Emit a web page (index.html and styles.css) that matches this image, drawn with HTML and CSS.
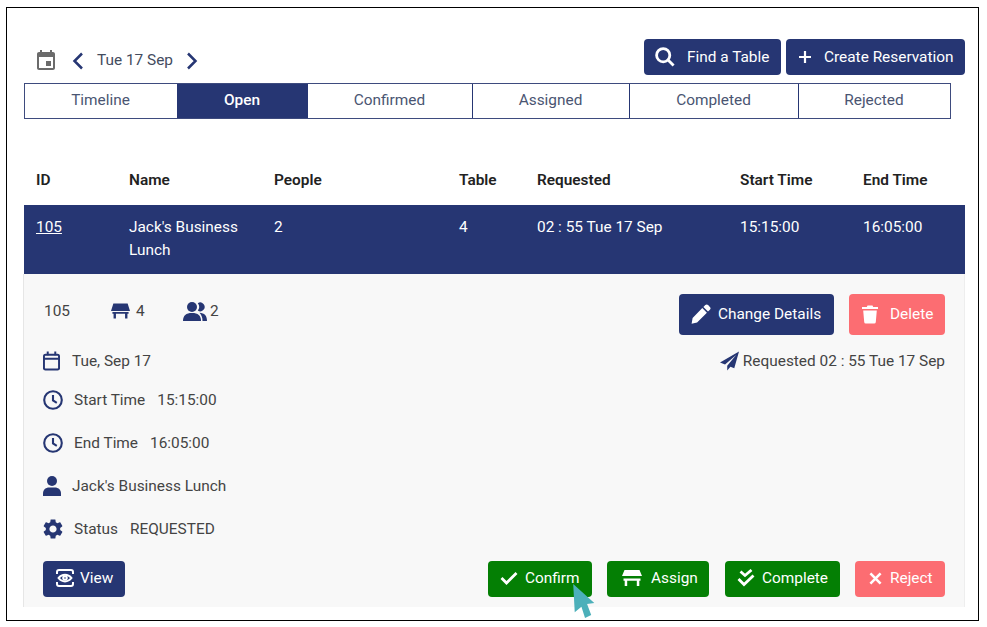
FILE: index.html
```html
<!DOCTYPE html>
<html lang="en">
<head>
<meta charset="utf-8">
<title>Reservations</title>
<link rel="stylesheet" href="styles.css">
</head>
<body>
<div class="frame">
  <header class="topbar">
    <div class="datenav">
      <svg class="ico-event" viewBox="0 0 24 24"><path d="M17 12h-5v5h5v-5zM16 1v2H8V1H6v2H5c-1.11 0-1.99.9-1.99 2L3 19c0 1.1.89 2 2 2h14c1.1 0 2-.9 2-2V5c0-1.1-.9-2-2-2h-1V1h-2zm3 18H5V8h14v11z"/></svg>
      <svg class="ico-chev ico-prev" viewBox="0 0 12 18"><path d="M10 1.500 2.500 9l7.500 7.500"/></svg>
      <span class="datetext">Tue 17 Sep</span>
      <svg class="ico-chev ico-next" viewBox="0 0 12 18"><path d="m2 1.500 7.500 7.500-7.500 7.500"/></svg>
    </div>
    <div class="topactions">
      <button class="btn btn-navy btn-find"><svg class="ico-white-stroke ico20 ico-search" viewBox="0 0 20 20"><circle cx="8.200" cy="8.200" r="6.600"/><path d="m12.800 12.800 5.800 5.800"/></svg>Find a Table</button>
      <button class="btn btn-navy btn-create"><svg class="ico-white-stroke ico14" viewBox="0 0 14 14"><path d="M7 1v12M1 7h12"/></svg>Create Reservation</button>
    </div>
  </header>

  <nav class="tabs">
    <div class="tab">Timeline</div>
    <div class="tab tab-active">Open</div>
    <div class="tab">Confirmed</div>
    <div class="tab">Assigned</div>
    <div class="tab">Completed</div>
    <div class="tab">Rejected</div>
  </nav>

  <div class="thead cols">
    <div>ID</div><div>Name</div><div>People</div><div>Table</div><div>Requested</div><div>Start Time</div><div>End Time</div>
  </div>
  <div class="trow cols">
    <div><a class="idlink" href="#">105</a></div>
    <div>Jack's Business Lunch</div>
    <div>2</div>
    <div>4</div>
    <div>02 : 55 Tue 17 Sep</div>
    <div>15:15:00</div>
    <div>16:05:00</div>
  </div>

  <section class="detail">
    <div class="detail-top">
      <div class="summary">
        <span class="sum-id">105</span>
        <span class="sum-item sum-table"><svg class="ico-navy ico-table" viewBox="0 0 20 16"><path d="M2.500 0h15L20 8H0zM1.500 9h17v2h-1.200v5h-2.500v-5H5.200v5H2.700v-5H1.500z"/></svg>4</span>
        <span class="sum-item"><svg class="ico-navy ico-users" viewBox="0 0 24 19"><circle cx="9" cy="5" r="5"/><path d="M0 19c0-5.500 3-8 9-8s9 2.500 9 8z"/><path d="M14.800 8.600a6 6 0 0 0 0-7.400 4.400 4.400 0 1 1 0 7.400zM16.500 10.800c5 .2 7.500 3 7.500 8.200h-4.500c0-3.300-1-6-3-8.200z"/></svg>2</span>
      </div>
      <div class="detail-actions">
        <button class="btn btn-navy btn-change"><svg class="ico-white ico20" viewBox="0 0 20 20"><path d="M14.300 1.100a2 2 0 0 1 2.800 0l1.800 1.800a2 2 0 0 1 0 2.800l-1.900 1.900-4.600-4.600zM11.300 4.100l4.600 4.600-9.800 9.800-5.500 1.300 1-5.800z"/></svg>Change Details</button>
        <button class="btn btn-red btn-delete"><svg class="ico-white ico-trash" viewBox="0 0 16 18"><path d="M5.500 0h5l.7 1.500H16v2H0v-2h4.800zM1.200 5h13.600l-1 11.500a1.600 1.600 0 0 1-1.600 1.500H3.800a1.600 1.600 0 0 1-1.600-1.500z"/></svg>Delete</button>
      </div>
    </div>

    <div class="date-row">
      <div class="line">
        <svg class="ico-navy-stroke ico-cal" viewBox="0 0 18 20"><rect x="1" y="3.500" width="16" height="15.500" rx="1.500"/><path d="M1 7.500h16M5 0v4M13 0v4"/></svg>
        <span class="date-label">Tue, Sep 17</span>
      </div>
      <div class="line requested">
        <svg class="ico-navy ico-plane" viewBox="0 0 20 20"><path d="M20 0 0 11.500l5.300 2.300L17 3.600 7.600 15v5l3.400-4 4 1.700z"/></svg>
        <span>Requested 02 : 55 Tue 17 Sep</span>
      </div>
    </div>

    <div class="line info">
      <svg class="ico-navy-stroke ico-clock" viewBox="0 0 20 20"><circle cx="10" cy="10" r="8.800"/><path d="M10 5v5.500l3.800 2.300"/></svg>
      <span class="info-label">Start Time</span><span>15:15:00</span>
    </div>
    <div class="line info">
      <svg class="ico-navy-stroke ico-clock" viewBox="0 0 20 20"><circle cx="10" cy="10" r="8.800"/><path d="M10 5v5.500l3.800 2.300"/></svg>
      <span class="info-label">End Time</span><span>16:05:00</span>
    </div>
    <div class="line info">
      <svg class="ico-navy ico-person" viewBox="0 0 18 20"><circle cx="9" cy="5" r="5"/><path d="M0 20v-2.500C0 13.500 3 11.500 6 11.500h6c3 0 6 2 6 6V20z"/></svg>
      <span class="name-label">Jack's Business Lunch</span>
    </div>
    <div class="line info">
      <svg class="ico-navy ico-gear" viewBox="2 2 20 20"><path d="M19.140 12.940c.04-.3.06-.61.06-.94 0-.32-.02-.64-.07-.94l2.030-1.580c.18-.14.23-.41.12-.61l-1.920-3.320c-.12-.22-.37-.29-.59-.22l-2.390.96c-.5-.38-1.030-.7-1.620-.94l-.36-2.540c-.04-.24-.24-.41-.48-.41h-3.840c-.24 0-.43.17-.47.41l-.36 2.540c-.59.24-1.130.57-1.620.94l-2.390-.96c-.22-.08-.47 0-.59.22L2.740 8.870c-.12.21-.08.47.12.61l2.030 1.580c-.05.3-.09.63-.09.94s.02.64.07.94l-2.030 1.580c-.18.14-.23.41-.12.61l1.920 3.320c.12.22.37.29.59.22l2.390-.96c.5.38 1.030.7 1.620.94l.36 2.540c.05.24.24.41.48.41h3.840c.24 0 .44-.17.47-.41l.36-2.540c.59-.24 1.130-.56 1.620-.94l2.390.96c.22.08.47 0 .59-.22l1.920-3.320c.12-.22.07-.47-.12-.61l-2.010-1.580zM12 15.600c-1.980 0-3.600-1.620-3.600-3.600s1.620-3.600 3.600-3.600 3.600 1.620 3.600 3.600-1.620 3.600-3.600 3.600z"/></svg>
      <span class="info-label">Status</span><span>REQUESTED</span>
    </div>

    <div class="bottom">
      <button class="btn btn-navy btn-view"><svg class="ico-white-stroke ico-eye" viewBox="0 0 18 18"><path d="M1 5V3a2 2 0 0 1 2-2h12a2 2 0 0 1 2 2v2M1 13v2a2 2 0 0 0 2 2h12a2 2 0 0 0 2-2v-2"/><path d="M2.500 9c3.500-4.500 9.500-4.500 13 0-3.500 4.500-9.500 4.500-13 0z"/><circle cx="9" cy="9" r="1.800"/></svg>View</button>
      <div class="bottom-actions">
        <button class="btn btn-green btn-confirm"><svg class="ico-white-stroke ico-check" viewBox="0 0 18 14"><path d="m1.500 7 5 5 10-10"/></svg>Confirm</button>
        <button class="btn btn-green btn-assign"><svg class="ico-white ico-table-w" viewBox="0 0 20 16"><path d="M2.500 0h15L20 6H0zM1.500 8.500h17v2.200h-1.200V16h-2.500v-5.300H5.200V16H2.700v-5.300H1.500z"/></svg>Assign</button>
        <button class="btn btn-green btn-complete"><svg class="ico-white-stroke ico-dcheck" viewBox="0 0 18 18"><path d="m3.500 2.500 4.500 4 6.500-5.500M1.500 10l5.500 5.500L16.500 6.500"/></svg>Complete</button>
        <button class="btn btn-red btn-reject"><svg class="ico-white-stroke ico-x" viewBox="0 0 14 14"><path d="m1.500 1.500 11 11M12.500 1.500l-11 11"/></svg>Reject</button>
      </div>
    </div>
  </section>

  <svg class="cursor" viewBox="0 0 21 34"><path d="M0 0 20.500 18.500 13.500 19.500 17.500 30 11.500 33 8 22 1.500 27.500z"/></svg>
</div>
</body>
</html>
```
FILE: styles.css
```css
* { box-sizing: border-box; }
html, body { margin: 0; padding: 0; background: #fff; }
body { padding: 7px 0 0 6px; font-family: Roboto, "Liberation Sans", sans-serif; font-size: 15.400px; color: #444; }
svg { display: block; flex: none; }

.frame { position: relative; width: 973px; height: 614px; border: 1px solid #000; padding: 31px 13px 0 17px; overflow: hidden; background: #fff; }

.topbar { display: flex; justify-content: space-between; height: 36px; margin-bottom: 8px; }
.datenav { display: flex; align-items: center; padding: 8px 0 0 10px; }
.ico-event { width: 24px; height: 24px; fill: #6b6b6b; }
.ico-chev { width: 12px; height: 18px; fill: none; stroke: #263673; stroke-width: 2.500; }
.ico-prev { margin: 0 13px 0 14px; }
.ico-next { margin-left: 13px; }
.datetext { color: #444c5e; padding-bottom: 2px; }
.topactions { display: flex; gap: 5px; }

.btn { display: flex; align-items: center; border: 0; border-radius: 4px; color: #fff; font: 400 15.400px Roboto, "Liberation Sans", sans-serif; padding: 0; cursor: pointer; }
.btn-navy { background: #263673; }
.btn-green { background: #047f04; }
.btn-red { background: #fc6d72; }
.btn-find { width: 137px; height: 36px; padding: 0 0 1px 11px; gap: 12px; }
.btn-create { width: 179px; height: 36px; padding: 0 0 1px 12px; gap: 12px; }
.ico20 { width: 20px; height: 20px; }
.ico14 { width: 14px; height: 14px; }
.ico-search { margin-top: 1px; }
.ico-white { fill: #fff; }
.ico-white-stroke { fill: none; stroke: #fff; stroke-width: 2.800; }
.ico14.ico-white-stroke { stroke-width: 2.200; }

.tabs { display: grid; grid-template-columns: 152px 131px 164px 157px 169px 1fr; width: 927px; height: 36px; border: 1px solid #3e4b7e; }
.tab { display: flex; align-items: center; justify-content: center; color: #4a5572; border-left: 1px solid #263673; padding: 0 1px 2px 0; }
.tab:first-child { border-left: 0; }
.tab-active { background: #263673; color: #fff; font-weight: 500; border-left: 0; }
.tab-active + .tab { border-left: 0; }

.cols { display: grid; grid-template-columns: 93px 145px 185px 78px 203px 123px 1fr; padding-left: 12px; }
.thead { margin-top: 43px; height: 43px; padding-bottom: 7px; align-items: center; color: #222; font-weight: 600; }
.trow { background: #263673; color: #fff; height: 69px; padding-top: 11px; line-height: 23px; }
.trow > div:nth-child(2) { padding-right: 10px; }
.idlink { color: #fff; }

.detail { margin-left: -1px; height: 333px; background: #f8f8f8; border-left: 1px solid #e6e6e6; border-right: 1px solid #eee; padding: 20px 19px 0; }
.detail-top { display: flex; justify-content: space-between; height: 41px; margin-bottom: 13px; }
.summary { display: flex; align-items: center; height: 34px; }
.sum-id { width: 67px; margin-left: 1px; }
.sum-item { display: flex; align-items: center; gap: 3px; }
.sum-table { width: 72px; gap: 6px; }
.ico-navy { fill: #263673; }
.ico-navy-stroke { fill: none; stroke: #263673; stroke-width: 2.100; }
.ico-table { width: 19px; height: 16px; }
.ico-users { width: 24px; height: 19px; }
.detail-actions { display: flex; gap: 15px; }
.btn-change { width: 155px; height: 41px; padding: 0 0 1px 12px; gap: 7px; }
.btn-delete { width: 96px; height: 41px; padding: 0 0 1px 13px; gap: 12px; }
.ico-trash { width: 16px; height: 19px; }

.date-row { display: flex; justify-content: space-between; height: 26px; margin-bottom: 4px; }
.line { display: flex; align-items: center; }
.ico-cal { width: 17px; height: 20px; }
.date-label { margin-left: 12px; }
.requested { gap: 4px; }
.ico-plane { width: 19px; height: 20px; }

.info { height: 43px; }
.info svg { margin-top: 1px; }
.ico-clock { width: 20px; height: 20px; }
.info-label { margin-left: 11px; margin-right: 12px; }
.ico-person { width: 18px; height: 20px; margin-right: 11px; }
.ico-gear { width: 20px; height: 20px; }

.bottom { display: flex; justify-content: space-between; margin-top: 11px; }
.bottom .btn { height: 36px; padding-bottom: 2px; }
.bottom-actions { display: flex; gap: 15px; }
.btn-view { width: 82px; padding-left: 13px; gap: 6px; }
.ico-eye { width: 18px; height: 18px; stroke-width: 2; }
.btn-confirm { width: 104px; padding-left: 12px; gap: 7px; }
.ico-check { width: 18px; height: 14px; }
.btn-assign { width: 102px; margin-right: 1px; padding-left: 15px; gap: 9px; }
.ico-table-w { width: 20px; height: 16px; }
.btn-complete { width: 115px; padding-left: 12px; gap: 7px; }
.ico-dcheck { width: 18px; height: 18px; }
.btn-reject { width: 90px; padding-left: 14px; gap: 8px; }
.ico-x { width: 13px; height: 13px; }

.cursor { position: absolute; left: 566px; top: 576px; width: 22px; height: 35px; fill: #4cb0ba; }
```
